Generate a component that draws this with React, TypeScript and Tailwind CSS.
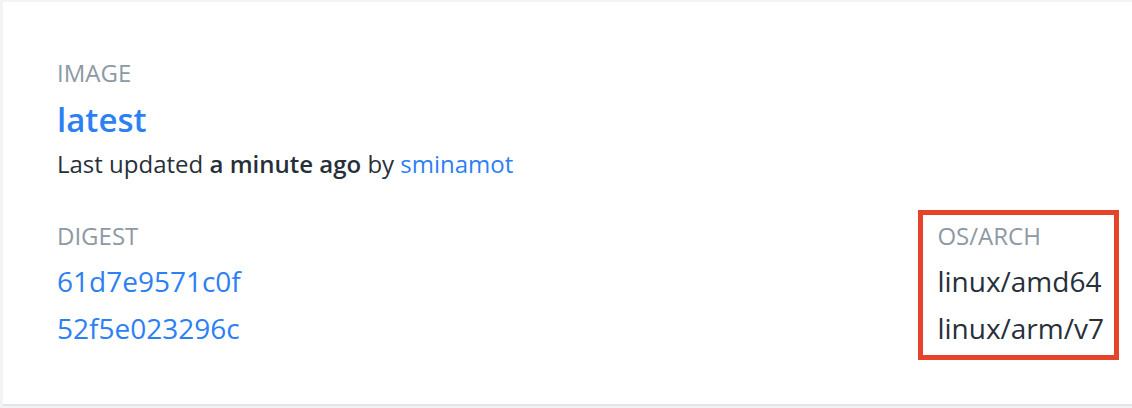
export default function App() {
  return (
    <div className="min-h-[408px] bg-[#f2f3f4] pl-[3px] pt-[2px] font-['Open_Sans',sans-serif]">
      <div className="h-[404px] bg-white border-b-[2px] border-[#e1e5e9] pl-[54px] pr-[13px] pt-[55px]">
        <div className="text-[24px] leading-[32px] text-[#8d99a5]">IMAGE</div>
        <div className="mt-[9px] text-[33px] leading-[44px] font-semibold text-[#2d7ff4]">latest</div>
        <div className="mt-[6px] text-[24px] leading-[32px] text-[#27303a]">
          Last updated <span className="font-semibold">a minute ago</span> by{' '}
          <span className="text-[#2d7ff4]">sminamot</span>
        </div>

        <div className="mt-[30px] flex justify-between items-start">
          <div className="pt-[10px]">
            <div className="text-[24px] leading-[32px] text-[#8d99a5]">DIGEST</div>
            <div className="mt-[6px] text-[28px] leading-[47px] text-[#2d7ff4]">
              <div>61d7e9571c0f</div>
              <div>52f5e023296c</div>
            </div>
          </div>

          <div className="border-[5px] border-[#e5432a] pl-[14px] pr-[10px] pt-[5px] pb-[3px]">
            <div className="text-[24px] leading-[32px] text-[#8d99a5]">OS/ARCH</div>
            <div className="mt-[6px] text-[28px] leading-[47px] text-[#27303a]">
              <div>linux/amd64</div>
              <div>linux/arm/v7</div>
            </div>
          </div>
        </div>
      </div>
    </div>
  )
}
